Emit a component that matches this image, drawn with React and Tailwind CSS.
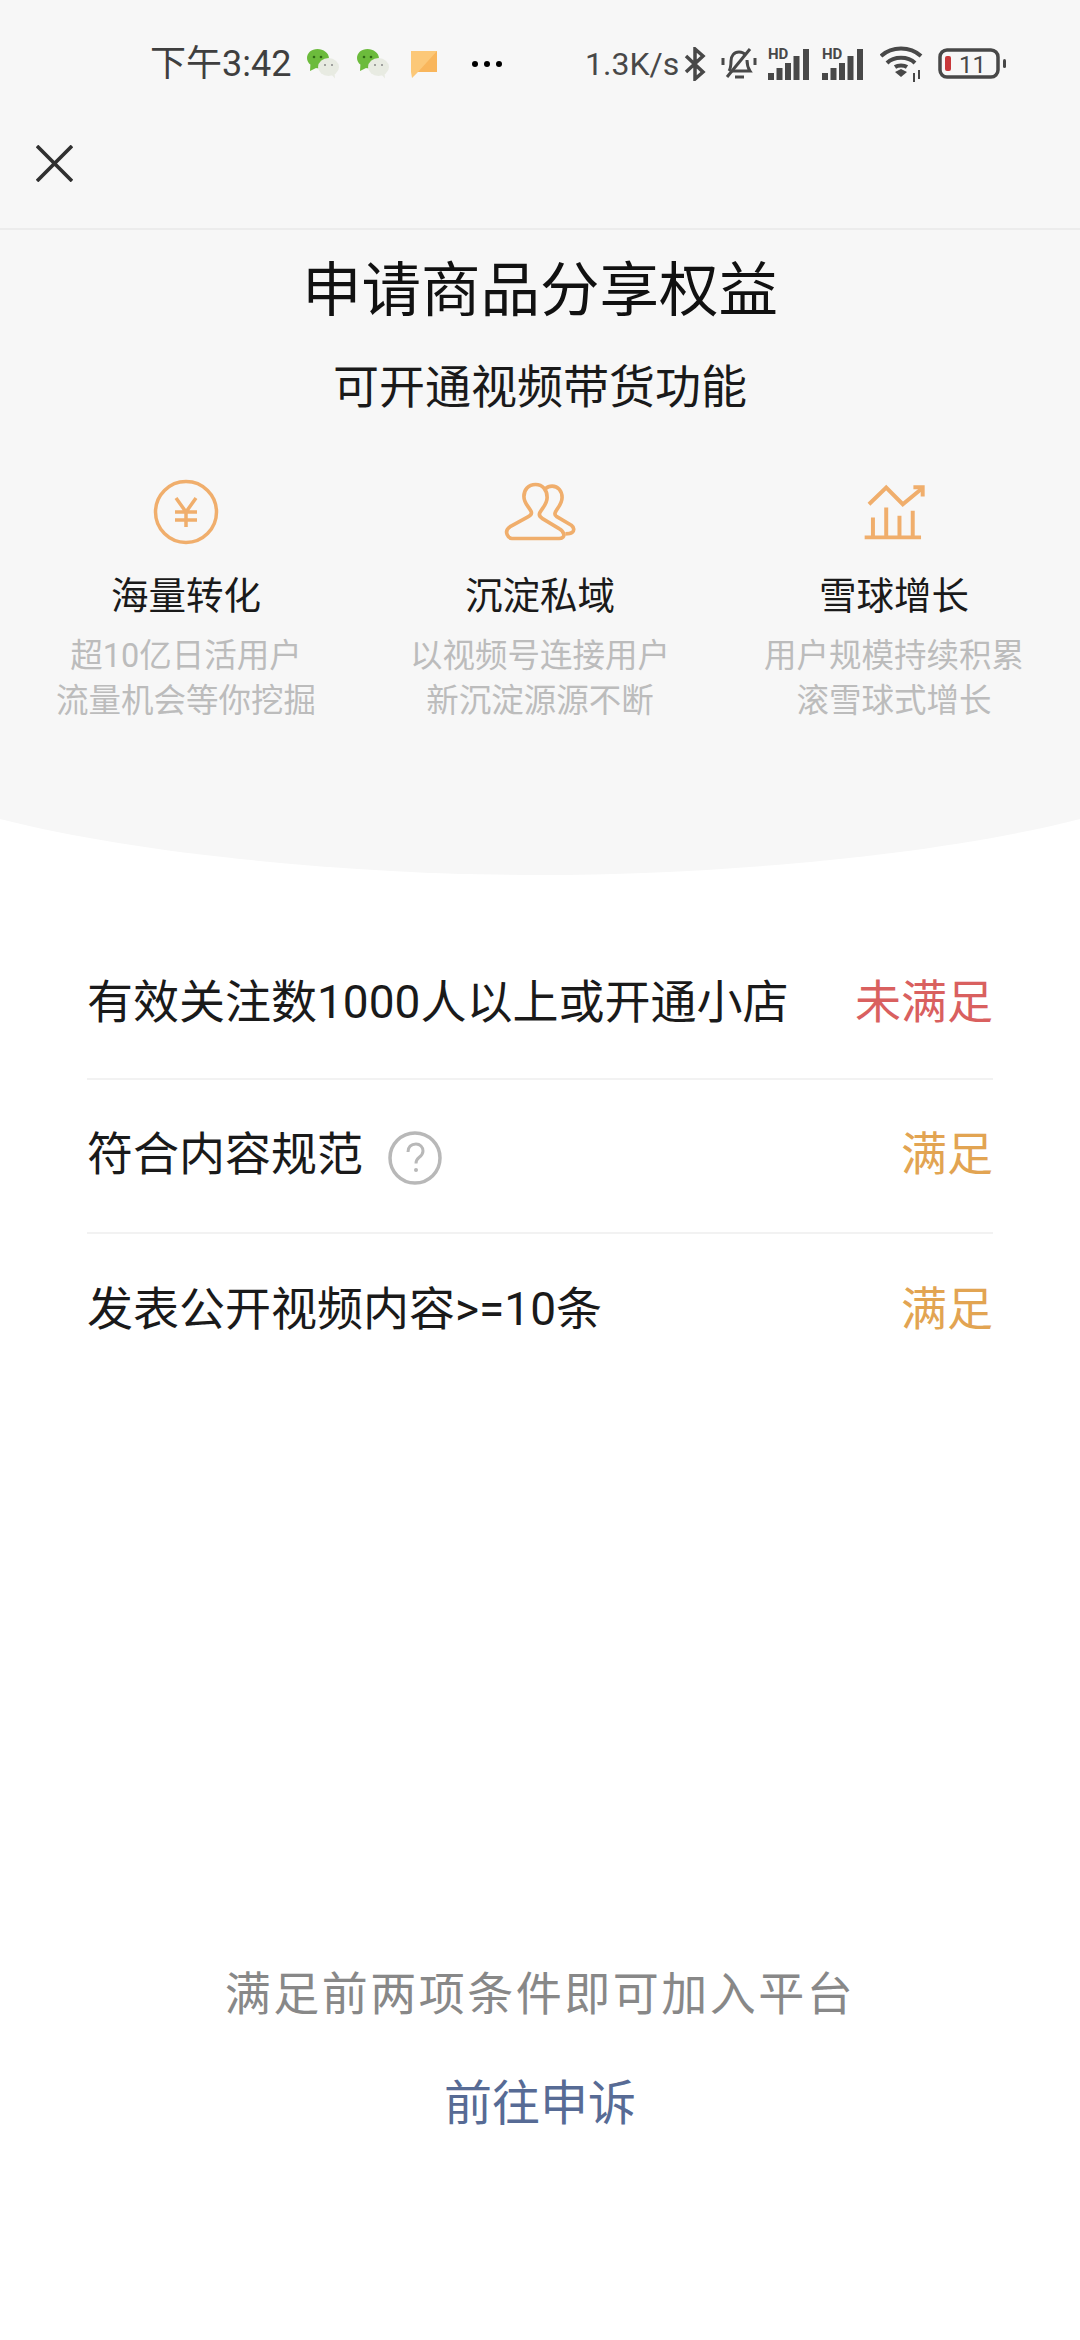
const FONT = "font-['Roboto','Noto_Sans_CJK_SC',sans-serif]";

// --- status bar icons ---
const WeChatIcon = () => (
  <svg width="32" height="30" viewBox="0 0 32 30">
    <path d="M10.500 0C4.500 0 0 3.900 0 9c0 2.900 1.500 5.200 3.400 6.600L3 22l6-3c.8.1 1.400.2 2.200.2 5.800 0 10.800-4.200 10.800-9.800C22 3.900 16.300 0 10.500 0z" fill="#6cbb3c" />
    <ellipse cx="21.500" cy="18" rx="10.500" ry="9" fill="#e8ebe2" />
    <path d="M24 25l4 4.500-.5-6.500z" fill="#e8ebe2" />
    <circle cx="7" cy="8" r="1.300" fill="#2f6b16" />
    <circle cx="14" cy="8" r="1.300" fill="#2f6b16" />
    <circle cx="18" cy="16" r="1" fill="#888" />
    <circle cx="25" cy="16" r="1" fill="#888" />
  </svg>
);

const NoteIcon = () => (
  <svg width="28" height="28" viewBox="0 0 28 28">
    <path d="M1 1h26v21H8l-6 6-1-6z" fill="#fcc878" />
    <path d="M27 1v21H8z" fill="#f9b65c" />
  </svg>
);

const BluetoothIcon = () => (
  <svg width="22" height="34" viewBox="0 0 22 34" fill="none" stroke="#484848" strokeWidth="3.500">
    <path d="M2 9l17 16-8 7V2l8 7L2 25" />
  </svg>
);

const BellOffIcon = () => (
  <svg width="36" height="36" viewBox="0 0 36 36" fill="none" stroke="#484848" strokeWidth="3">
    <path d="M8 25c2-3 2-6 2-10 0-5 3-9 8-9 3 0 5 1 6.500 3M26 14c0 5 1 8 3 11H11" />
    <path d="M14 31h9" strokeWidth="3" />
    <path d="M6 31L29 3" />
    <path d="M2 12v7M34 12v7" />
  </svg>
);

// the HD label sits in its own box so it isn't clipped by the svg
const SignalIcon = () => (
  <span className="block relative w-[42px] h-[32px]">
    <span className="absolute left-0 top-0 text-[15px] leading-[13px] font-bold text-[#484848]">HD</span>
    <svg width="42" height="32" viewBox="0 0 42 32" className="block">
      <rect x="0" y="25" width="6" height="7" fill="#484848" />
      <rect x="8.500" y="20" width="6" height="12" fill="#484848" />
      <rect x="17" y="15" width="6" height="17" fill="#484848" />
      <rect x="25.500" y="8" width="6" height="24" fill="#484848" />
      <rect x="35" y="1" width="6" height="31" fill="#484848" />
    </svg>
  </span>
);

const WifiIcon = () => (
  <svg width="44" height="36" viewBox="0 0 44 36" fill="none" stroke="#484848" strokeWidth="4">
    <path d="M1 10c11-10 29-10 40 0" />
    <path d="M7 17c7-7 21-7 28 0" />
    <path d="M15 21c3-2 9-2 12 0" />
    <path d="M15 26l6 5 6-5-6-3z" fill="#484848" stroke="none" />
    <path d="M34 27v9M39 24v9" strokeWidth="2" />
  </svg>
);

const BatteryIcon = () => (
  <svg width="70" height="32" viewBox="0 0 70 32">
    <rect x="2" y="2" width="58" height="27" rx="7" fill="none" stroke="#484848" strokeWidth="3.500" />
    <rect x="7" y="8" width="6" height="15" rx="2" fill="#c8383a" />
    <text x="21" y="25" fontSize="24" fill="#484848" fontFamily="Roboto, sans-serif">11</text>
    <rect x="65" y="11" width="3" height="9" rx="1.500" fill="#484848" />
  </svg>
);

// --- feature icons ---
const YenIcon = () => (
  <svg width="66" height="66" viewBox="0 0 66 66" fill="none" stroke="#f0ae6c" strokeWidth="3.500">
    <circle cx="33" cy="33" r="30.500" />
    <path d="M23 19l10 14 10-14M33 33v15M22 33h22M22 41h22" />
  </svg>
);

const PeopleIcon = () => (
  <svg width="73" height="60" viewBox="70 65 220 180" fill="none" stroke="#f0ae6c" strokeWidth="11" strokeLinejoin="round">
    <path d="M165 72c-22 0-35 16-35 36 0 20 14 30 22 46 3 8-2 12-10 16l-52 28c-12 8-15 16-10 26 3 8 6 11 14 11h142c10 0 16-6 14-14-2-7-6-12-14-16l-50-30c-8-5-12-10-8-18 8-15 22-26 22-46 0-22-13-39-35-39z" />
    <path d="M195 85c6-6 12-8 20-8 18 0 30 15 30 34 0 18-12 30-20 44-3 6-2 10 4 14l44 26c8 6 10 16 2 22-4 3-10 4-20 4" />
  </svg>
);

const GrowthIcon = () => (
  <svg width="63" height="57" viewBox="70 75 190 170" fill="none" stroke="#f0ae6c" strokeWidth="12">
    <path d="M88 135l52-50 50 50 55-45" />
    <path d="M222 84h28v28" />
    <path d="M100 235v-60M140 235v-90M180 235v-65M220 235v-80" />
    <path d="M75 235h170" />
  </svg>
);

const HelpIcon = () => (
  <svg width="54" height="54" viewBox="0 0 54 54" fill="none" stroke="#b8b8b8" strokeWidth="3.500">
    <circle cx="27" cy="27" r="25" />
    <path d="M20 21c0-5 3-8 8-8 4 0 7 3 7 7 0 3-2 5-4 6.500-2 1.500-3 3-3 6" strokeWidth="3" />
    <circle cx="28" cy="39" r="2" fill="#b8b8b8" stroke="none" />
  </svg>
);

const features = [
  { icon: <YenIcon />, title: '海量转化', lines: ['超10亿日活用户', '流量机会等你挖掘'] },
  { icon: <PeopleIcon />, title: '沉淀私域', lines: ['以视频号连接用户', '新沉淀源源不断'] },
  { icon: <GrowthIcon />, title: '雪球增长', lines: ['用户规模持续积累', '滚雪球式增长'] },
];

const Requirement = ({ label, help, status, statusClass, className }) => (
  <div className={`h-[154px] flex items-center justify-between ${className}`}>
    <div className="flex items-center">
      <span className="text-[46px] leading-[60px] text-[#1a1a1a]">{label}</span>
      {help && <span className="ml-[25px] translate-y-[4px]"><HelpIcon /></span>}
    </div>
    <span className={`text-[46px] leading-[60px] ${statusClass}`}>{status}</span>
  </div>
);

export default function App() {
  return (
    <div className={`w-[1080px] h-[2340px] bg-white flex flex-col overflow-hidden ${FONT}`}>
      <div className="bg-[#f7f7f7] flex flex-col">
        <div className="h-[128px] flex items-center pl-[150px]">
          <span className="text-[36px] leading-none text-[#3f3f3f] w-[157px]">下午3:42</span>
          <WeChatIcon />
          <span className="ml-[18px]"><WeChatIcon /></span>
          <span className="ml-[21px]"><NoteIcon /></span>
          <span className="ml-[34px] flex gap-[6px]">
            <span className="w-[6px] h-[6px] rounded-full bg-black" />
            <span className="w-[6px] h-[6px] rounded-full bg-black" />
            <span className="w-[6px] h-[6px] rounded-full bg-black" />
          </span>
          <span className="ml-[83px] text-[32px] leading-none text-[#484848] w-[99px]">1.3K/s</span>
          <BluetoothIcon />
          <span className="ml-[15px]"><BellOffIcon /></span>
          <span className="ml-[11px]"><SignalIcon /></span>
          <span className="ml-[12px]"><SignalIcon /></span>
          <span className="ml-[16px]"><WifiIcon /></span>
          <span className="ml-[14px]"><BatteryIcon /></span>
        </div>

        <div className="h-[102px] flex items-center pl-[36px] pb-[30px] border-b-2 border-[#ececec]">
          <svg width="37" height="37" viewBox="0 0 38 38" stroke="#303030" strokeWidth="3.800">
            <path d="M1 1l36 36M37 1L1 37" />
          </svg>
        </div>

        <h1 className="mt-[21px] h-[80px] text-center text-[59.5px] leading-[80px] font-normal text-[#111]">申请商品分享权益</h1>
        <p className="mt-[26px] h-[60px] text-center text-[46px] leading-[60px] text-[#1a1a1a]">可开通视频带货功能</p>

        <div className="mt-[62px] grid grid-cols-3 px-[9px] pb-[95px]">
          {features.map((f) => (
            <div key={f.title} className="flex flex-col items-center">
              <div className="h-[66px] flex items-center justify-center">{f.icon}</div>
              <div className="mt-[26px] text-[37.500px] leading-[50px] text-[#1a1a1a]">{f.title}</div>
              <div className="mt-[13px] text-center text-[32.500px] leading-[45px] text-[#bcbcbc]">
                {f.lines.map((l) => <div key={l}>{l}</div>)}
              </div>
            </div>
          ))}
        </div>
      </div>

      <svg width="1080" height="56" viewBox="0 0 1080 56" className="block shrink-0">
        <path d="M0 0H1080C940 36 720 56 540 56S140 36 0 0z" fill="#f7f7f7" />
      </svg>

      <div className="mt-[51px] mx-[87px]">
        <Requirement label="有效关注数1000人以上或开通小店" status="未满足" statusClass="text-[#d9605f]" className="border-b-2 border-[#f2f2f2]" />
        <Requirement label="符合内容规范" help status="满足" statusClass="text-[#e2a452]" className="pb-[4px] border-b-2 border-[#f2f2f2]" />
        <Requirement label="发表公开视频内容>=10条" status="满足" statusClass="text-[#e2a452]" className="pb-[4px]" />
      </div>

      <div className="mt-auto pb-[206px] flex flex-col items-center">
        <p className="text-[46px] leading-[60px] tracking-[2.500px] text-[#888]">满足前两项条件即可加入平台</p>
        <button className="mt-[50px] text-[48px] leading-[60px] text-[#576b95]">前往申诉</button>
      </div>
    </div>
  );
}
